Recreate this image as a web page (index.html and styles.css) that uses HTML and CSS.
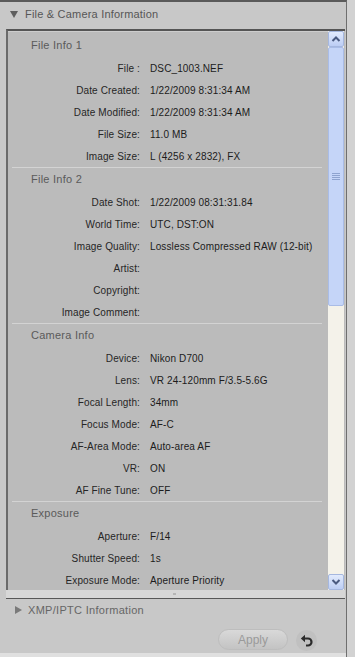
FILE: index.html
```html
<!DOCTYPE html>
<html>
<head>
<meta charset="utf-8">
<link rel="stylesheet" href="styles.css">
</head>
<body>
<div class="app">
  <div class="hdr"><span class="tri-down"></span><span>File &amp; Camera Information</span></div>
  <div class="panel">
    <div class="content">
      <div class="section first">
        <div class="stitle">File Info 1</div>
        <div class="row"><span class="lbl">File :</span><span class="val">DSC_1003.NEF</span></div>
        <div class="row"><span class="lbl">Date Created:</span><span class="val">1/22/2009 8:31:34 AM</span></div>
        <div class="row"><span class="lbl">Date Modified:</span><span class="val">1/22/2009 8:31:34 AM</span></div>
        <div class="row"><span class="lbl">File Size:</span><span class="val">11.0 MB</span></div>
        <div class="row"><span class="lbl">Image Size:</span><span class="val">L (4256 x 2832), FX</span></div>
      </div>
      <div class="section">
        <div class="stitle">File Info 2</div>
        <div class="row"><span class="lbl">Date Shot:</span><span class="val">1/22/2009 08:31:31.84</span></div>
        <div class="row"><span class="lbl">World Time:</span><span class="val">UTC, DST:ON</span></div>
        <div class="row"><span class="lbl">Image Quality:</span><span class="val">Lossless Compressed RAW (12-bit)</span></div>
        <div class="row"><span class="lbl">Artist:</span><span class="val"></span></div>
        <div class="row"><span class="lbl">Copyright:</span><span class="val"></span></div>
        <div class="row"><span class="lbl">Image Comment:</span><span class="val"></span></div>
      </div>
      <div class="section">
        <div class="stitle">Camera Info</div>
        <div class="row"><span class="lbl">Device:</span><span class="val">Nikon D700</span></div>
        <div class="row"><span class="lbl">Lens:</span><span class="val">VR 24-120mm F/3.5-5.6G</span></div>
        <div class="row"><span class="lbl">Focal Length:</span><span class="val">34mm</span></div>
        <div class="row"><span class="lbl">Focus Mode:</span><span class="val">AF-C</span></div>
        <div class="row"><span class="lbl">AF-Area Mode:</span><span class="val">Auto-area AF</span></div>
        <div class="row"><span class="lbl">VR:</span><span class="val">ON</span></div>
        <div class="row"><span class="lbl">AF Fine Tune:</span><span class="val">OFF</span></div>
      </div>
      <div class="section">
        <div class="stitle">Exposure</div>
        <div class="row"><span class="lbl">Aperture:</span><span class="val">F/14</span></div>
        <div class="row"><span class="lbl">Shutter Speed:</span><span class="val">1s</span></div>
        <div class="row"><span class="lbl">Exposure Mode:</span><span class="val">Aperture Priority</span></div>
      </div>
    </div>
    <div class="scrollbar">
      <div class="sb-btn">
        <svg width="10" height="8" viewBox="0 0 10 8"><path d="M1.5 6 L5 2.5 L8.5 6" fill="none" stroke="#4a5a80" stroke-width="2"/></svg>
      </div>
      <div class="sb-thumb">
        <div class="grip"><i></i><i></i><i></i><i></i></div>
      </div>
      <div class="sb-track"></div>
      <div class="sb-btn">
        <svg width="10" height="8" viewBox="0 0 10 8"><path d="M1.5 2 L5 5.5 L8.5 2" fill="none" stroke="#4a5a80" stroke-width="2"/></svg>
      </div>
    </div>
  </div>
  <div class="panel-foot"><span class="dot"></span></div>
  <div class="hdr2"><span class="tri-right"></span><span>XMP/IPTC Information</span></div>
  <div class="actions">
    <button class="apply">Apply</button>
    <div class="undo">
      <svg width="16" height="16" viewBox="0 0 16 16"><path d="M5 5.5 H9 A3.5 3.5 0 0 1 9 12.5 H7" fill="none" stroke="#2a2a2a" stroke-width="2.2"/><path d="M1.8 5.5 L6 1.8 L6 9.2 Z" fill="#2a2a2a"/></svg>
    </div>
  </div>
</div>
</body>
</html>
```
FILE: styles.css
```css
* { box-sizing: border-box; }
html, body { margin: 0; padding: 0; }
body {
  background: #d2d2d2;
  font-family: "Liberation Sans", Arial, sans-serif;
  width: 355px;
  height: 657px;
  overflow: hidden;
}
.app {
  width: 347px;
  height: 657px;
  background: #c8c8c8;
  border-top: 2px solid #5a5a5a;
  border-right: 1px solid #6f6f6f;
  display: flex;
  flex-direction: column;
}
.hdr {
  height: 27px;
  padding: 0 0 3px 10px;
  display: flex;
  align-items: center;
  font-size: 11px;
  letter-spacing: 0.2px;
  color: #565656;
  flex: none;
}
.tri-down {
  width: 0; height: 0;
  border-left: 4px solid transparent;
  border-right: 4px solid transparent;
  border-top: 7px solid #5e5e5e;
  margin-right: 7px;
}
.panel {
  margin-left: 6px;
  width: 339px;
  height: 561px;
  border-top: 2px solid #555;
  border-left: 2px solid #6a6a6a;
  display: flex;
  flex: none;
  background: #bbbbbb;
}
.content {
  width: 320px;
  height: 559px;
  overflow: hidden;
  padding-top: 2px;
  border-top: 1px solid #cdcdcd;
}
.section {
  border-top: 1px solid #d3d3d3;
  margin: 0 6px 0 4px;
}
.section.first { border-top: none; }
.stitle {
  height: 23px;
  line-height: 23px;
  padding-left: 19px;
  font-size: 11px;
  letter-spacing: 0.25px;
  color: #5a5a5a;
}
.row {
  height: 22px;
  display: grid;
  grid-template-columns: 128px 1fr;
  column-gap: 10px;
  align-items: center;
  font-size: 10px;
  letter-spacing: 0.12px;
  margin-right: -6px;
}
.lbl { text-align: right; color: #262626; }
.val { color: #1c1c1c; white-space: nowrap; }
.scrollbar {
  width: 16px;
  height: 559px;
  display: flex;
  flex-direction: column;
  background: #f3f1e9;
  margin-right: 1px;
}
.sb-btn {
  height: 16px;
  flex: none;
  background: linear-gradient(#e2ebfd, #bccdf4);
  border: 1px solid #a5b7df;
  border-radius: 2px;
  display: flex;
  align-items: center;
  justify-content: center;
}
.sb-thumb {
  height: 259px;
  flex: none;
  background: #c5d5f8;
  border: 1px solid #a9bce6;
  border-radius: 2px;
  display: flex;
  align-items: center;
  justify-content: center;
}
.grip { display: flex; flex-direction: column; gap: 1px; }
.grip i { display: block; width: 8px; height: 1px; background: #8ea3cf; }
.sb-track { flex: 1; background: #f4f2ea; }
.panel-foot {
  margin-left: 6px;
  width: 339px;
  height: 9px;
  background: #d7d7d7;
  border-bottom: 1px solid #575757;
  flex: none;
  display: flex;
  justify-content: center;
  align-items: center;
}
.dot { width: 3px; height: 2px; background: #b5b5b5; margin-left: -2px; }
.hdr2 {
  height: 22px;
  padding-left: 15px;
  display: flex;
  align-items: center;
  font-size: 11px;
  letter-spacing: 0.3px;
  color: #666;
  flex: none;
}
.tri-right {
  width: 0; height: 0;
  border-top: 4px solid transparent;
  border-bottom: 4px solid transparent;
  border-left: 7px solid #7a7a7a;
  margin-right: 6px;
}
.actions {
  flex: 1;
  display: flex;
  align-items: flex-start;
  padding: 8px 0 0 218px;
  gap: 8px;
  border-bottom: 4px solid #e0e0e0;
}
.apply {
  width: 70px;
  height: 21px;
  border-radius: 11px;
  border: 1px solid #bdbdbd;
  background: linear-gradient(#d9d9d9, #c3c3c3);
  color: #9a9a9a;
  font-family: "Liberation Sans", Arial, sans-serif;
  font-size: 12px;
  padding: 0;
}
.undo {
  width: 21px;
  height: 21px;
  margin-top: 1px;
  border-radius: 50%;
  background: #c0c0c0;
  display: flex;
  align-items: center;
  justify-content: center;
}
```
